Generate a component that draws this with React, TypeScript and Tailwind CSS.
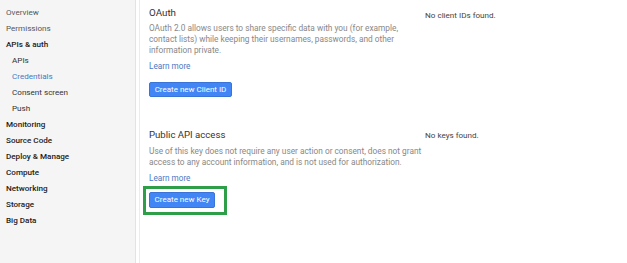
import React from "react";

const nav: { label: string; kind: "top" | "head" | "sub" | "active" }[] = [
  { label: "Overview", kind: "top" },
  { label: "Permissions", kind: "top" },
  { label: "APIs & auth", kind: "head" },
  { label: "APIs", kind: "sub" },
  { label: "Credentials", kind: "active" },
  { label: "Consent screen", kind: "sub" },
  { label: "Push", kind: "sub" },
  { label: "Monitoring", kind: "head" },
  { label: "Source Code", kind: "head" },
  { label: "Deploy & Manage", kind: "head" },
  { label: "Compute", kind: "head" },
  { label: "Networking", kind: "head" },
  { label: "Storage", kind: "head" },
  { label: "Big Data", kind: "head" },
];

export default function App() {
  return (
    <div
      className="flex w-[627px] h-[263px] bg-white overflow-hidden"
      style={{ fontFamily: "Roboto, 'Liberation Sans', Arial, sans-serif" }}
    >
      <div className="w-[136px] shrink-0 bg-[#f5f5f5] border-r border-[#e3e3e3] pt-[4px]">
        {nav.map((n) => (
          <div
            key={n.label}
            className={
              "h-[16px] flex items-center text-[8.1px] leading-none " +
              (n.kind === "top"
                ? "pl-[6px] text-[#555]"
                : n.kind === "head"
                ? "pl-[6px] text-[#222] font-medium"
                : n.kind === "active"
                ? "pl-[12px] text-[#4a78c2]"
                : "pl-[12px] text-[#333]")
            }
          >
            {n.label}
          </div>
        ))}
      </div>
      <div className="w-[3px] shrink-0 bg-white" />
      <div className="w-px shrink-0 bg-[#ececec]" />
      <div className="flex-1 flex pl-[9px] pt-[6px]">
        <div className="w-[266px] shrink-0 whitespace-nowrap">
          <div className="text-[9.8px] text-[#333] leading-[14px]">OAuth</div>
          <p className="mt-[3px] text-[8.3px] leading-[11px] text-[#888]">
            OAuth 2.0 allows users to share specific data with you (for example,
            <br />
            contact lists) while keeping their usernames, passwords, and other
            <br />
            information private.
          </p>
          <div className="mt-[4px] text-[8.2px] leading-[12px] text-[#4a78c2]">Learn more</div>
          <button className="mt-[10px] h-[15px] w-[83px] bg-[#4285f4] border border-[#3a74d8] rounded-[2px] text-white text-[8px] leading-none">
            Create new Client ID
          </button>

          <div className="mt-[29px] text-[9.6px] text-[#333] leading-[14px]">Public API access</div>
          <p className="mt-[4px] text-[8.3px] leading-[11px] text-[#888]">
            Use of this key does not require any user action or consent, does not grant
            <br />
            access to any account information, and is not used for authorization.
          </p>
          <div className="mt-[4px] text-[8.2px] leading-[12px] text-[#4a78c2]">Learn more</div>
          <div className="-ml-[6px] mt-[2px] w-[84px] h-[29px] border-[3px] border-[#2e9e48] flex items-center pl-[3px]">
            <button className="h-[16px] w-[66px] bg-[#4285f4] border border-[#3a74d8] rounded-[2px] text-white text-[8px] leading-none">
              Create new Key
            </button>
          </div>
        </div>
        <div className="relative flex-1">
          <div className="absolute left-[10px] top-[3px] whitespace-nowrap text-[8.1px] text-[#444]">
            No client IDs found.
          </div>
          <div className="absolute left-[10px] top-[123px] whitespace-nowrap text-[8.1px] text-[#444]">
            No keys found.
          </div>
        </div>
      </div>
    </div>
  );
}
